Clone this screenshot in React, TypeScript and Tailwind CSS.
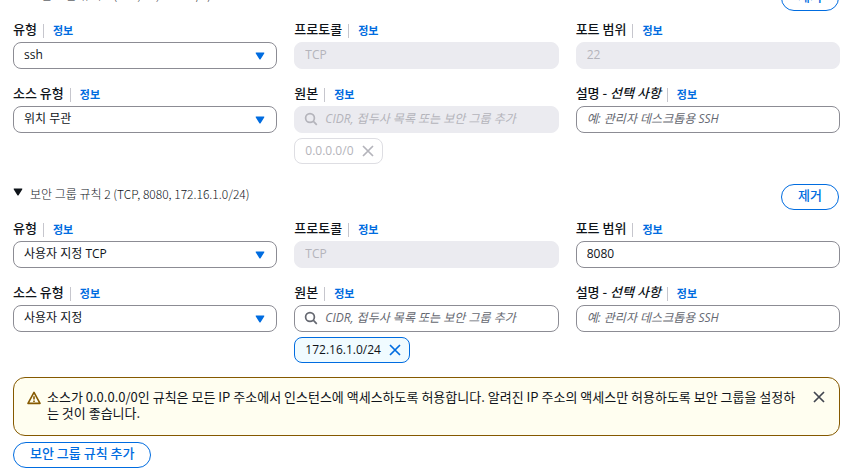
import { useState } from "react";
import type { ReactNode } from "react";

type Rule = {
  id: string;
  title: string;
  type: string;
  protocol: string;
  port: string;
  portLocked: boolean;
  sourceType: string;
  cidr: string;
  sourceLocked: boolean;
};

const rules: Rule[] = [
  {
    id: "rule-1",
    title: "보안 그룹 규칙 1 (TCP, 22, 0.0.0.0/0)",
    type: "ssh",
    protocol: "TCP",
    port: "22",
    portLocked: true,
    sourceType: "위치 무관",
    cidr: "0.0.0.0/0",
    sourceLocked: true,
  },
  {
    id: "rule-2",
    title: "보안 그룹 규칙 2 (TCP, 8080, 172.16.1.0/24)",
    type: "사용자 지정 TCP",
    protocol: "TCP",
    port: "8080",
    portLocked: false,
    sourceType: "사용자 지정",
    cidr: "172.16.1.0/24",
    sourceLocked: false,
  },
];

const control =
  "block h-[27px] w-full rounded-lg border border-[#8c8c94] bg-white px-2.5 pb-0.5 text-[#0f141a] placeholder:italic placeholder:text-[#656871] placeholder:opacity-100 disabled:border-[#ebebf0] disabled:bg-[#ebebf0] disabled:text-[#b4b4bb] disabled:placeholder:text-[#b4b4bb]";

const pill =
  "h-[26px] shrink-0 rounded-full border border-[#006ce0] bg-white px-4 pb-1 font-['Noto_Sans_CJK_KR',sans-serif] text-[13px] leading-4 font-medium text-[#006ce0]";

function CloseIcon({ className }: { className: string }) {
  return (
    <svg viewBox="0 0 12 12" className={className} fill="none" stroke="currentColor" strokeWidth="1.7">
      <path d="M1 1l10 10M11 1L1 11" />
    </svg>
  );
}

function Field({
  id,
  label,
  hint,
  children,
}: {
  id: string;
  label: string;
  hint?: string;
  children: ReactNode;
}) {
  return (
    <div className="min-w-0">
      <div className="mb-1 flex h-[18px] items-center font-['Noto_Sans_CJK_KR',sans-serif]">
        <label htmlFor={id} className="text-[13px] leading-4 font-medium">
          {label}
          {hint && <i> {hint}</i>}
        </label>
        <span className="mt-1 ml-1.5 h-3.5 w-px bg-[#c6c6cd]" />
        <a href="#info" className="mt-0.5 ml-[9px] text-[11px] leading-4 font-bold text-[#006ce0]">
          정보
        </a>
      </div>
      {children}
    </div>
  );
}

function Select({ id, value }: { id: string; value: string }) {
  return (
    <div className="relative">
      <select id={id} defaultValue={value} className={`${control} appearance-none`}>
        <option>{value}</option>
      </select>
      <svg viewBox="0 0 10 8" className="pointer-events-none absolute top-2.5 right-3 h-2 w-2.5 fill-[#006ce0]">
        <path d="M1.2 0.5h7.6q1 0 .4.9L5.6 7.2q-.6.8-1.2 0L.8 1.4Q.2.5 1.2.5z" />
      </svg>
    </div>
  );
}

function RuleHeader({ rule }: { rule: Rule }) {
  return (
    <div className="flex items-start justify-between pr-px">
      <button
        type="button"
        className="flex items-center font-['Noto_Sans_CJK_KR',sans-serif] text-xs leading-5 font-light text-[#0f141a]"
      >
        <svg viewBox="0 0 10 8" className="mr-[7px] mb-1 h-2 w-2.5 fill-[#0f141a]">
          <path d="M1.2 0.5h7.6q1 0 .4.9L5.6 7.2q-.6.8-1.2 0L.8 1.4Q.2.5 1.2.5z" />
        </svg>
        {rule.title}
      </button>
      <button type="button" className={pill}>
        제거
      </button>
    </div>
  );
}

function RuleForm({ rule }: { rule: Rule }) {
  const chip = rule.sourceLocked
    ? "border-[#dedee3] bg-white text-[#b4b4bb]"
    : "border-[#006ce0] bg-[#f0fbff] text-[#0f141a]";

  return (
    <section>
      <RuleHeader rule={rule} />
      <div className="mt-[9px] grid grid-cols-3 gap-x-[17px] gap-y-[15px]">
        <Field id={`${rule.id}-type`} label="유형">
          <Select id={`${rule.id}-type`} value={rule.type} />
        </Field>
        <Field id={`${rule.id}-protocol`} label="프로토콜">
          <input id={`${rule.id}-protocol`} className={control} defaultValue={rule.protocol} disabled />
        </Field>
        <Field id={`${rule.id}-port`} label="포트 범위">
          <input
            id={`${rule.id}-port`}
            className={control}
            defaultValue={rule.port}
            disabled={rule.portLocked}
          />
        </Field>
        <Field id={`${rule.id}-source-type`} label="소스 유형">
          <Select id={`${rule.id}-source-type`} value={rule.sourceType} />
        </Field>
        <Field id={`${rule.id}-source`} label="원본">
          <div className="relative">
            <input
              id={`${rule.id}-source`}
              className={`${control} pl-[30px]`}
              placeholder="CIDR, 접두사 목록 또는 보안 그룹 추가"
              disabled={rule.sourceLocked}
            />
            <svg
              viewBox="0 0 14 14"
              className={`pointer-events-none absolute top-1.5 left-2.5 size-3.5 ${rule.sourceLocked ? "text-[#b4b4bb]" : "text-[#656871]"}`}
              fill="none"
              stroke="currentColor"
              strokeWidth="1.7"
            >
              <circle cx="6" cy="6" r="4.4" />
              <path d="M9.2 9.2l3.6 3.6" />
            </svg>
          </div>
          <div className={`mt-[5px] inline-flex h-[26px] items-center rounded-lg border pr-2 pl-2.5 align-top ${chip}`}>
            <span>{rule.cidr}</span>
            <button
              type="button"
              aria-label={`${rule.cidr} 제거`}
              disabled={rule.sourceLocked}
              className={rule.sourceLocked ? "ml-2" : "ml-2 text-[#006ce0]"}
            >
              <CloseIcon className="size-3" />
            </button>
          </div>
        </Field>
        <Field id={`${rule.id}-description`} label="설명 -" hint="선택 사항">
          <input
            id={`${rule.id}-description`}
            className={control}
            placeholder="예: 관리자 데스크톱용 SSH"
          />
        </Field>
      </div>
    </section>
  );
}

export default function App() {
  const [showWarning, setShowWarning] = useState(true);

  return (
    <div className="overflow-hidden bg-white pr-[5px] pl-[13px] font-['Open_Sans','Noto_Sans_CJK_KR',sans-serif] text-xs text-[#0f141a]">
      <div className="-mt-[15px] flex flex-col gap-5">
        {rules.map((rule) => (
          <RuleForm key={rule.id} rule={rule} />
        ))}
      </div>

      {showWarning && (
        <div className="mt-3.5 flex h-[59px] items-start rounded-xl border border-[#855900] bg-[#fffef0] pt-[11px] pr-3.5 pl-[13px]">
          <svg
            viewBox="0 0 14 14"
            className="mt-0.5 size-3.5 shrink-0 text-[#855900]"
            fill="none"
            stroke="currentColor"
            strokeWidth="1.6"
            strokeLinejoin="round"
          >
            <path d="M7 1.4L13 12.4H1z" />
            <path d="M7 5.2v3.4M7 9.6v1.4" />
          </svg>
          <p className="ml-1.5 flex-1 font-['Noto_Sans_CJK_KR',sans-serif] text-[13px] leading-4">
            소스가 0.0.0.0/0인 규칙은 모든 IP 주소에서 인스턴스에 액세스하도록 허용합니다. 알려진 IP 주소의
            액세스만 허용하도록 보안 그룹을 설정하는 것이 좋습니다.
          </p>
          <button
            type="button"
            aria-label="닫기"
            className="mt-0.5 ml-4 text-[#424650]"
            onClick={() => setShowWarning(false)}
          >
            <CloseIcon className="size-3" />
          </button>
        </div>
      )}

      <button type="button" className={`${pill} mt-1.5 block`}>
        보안 그룹 규칙 추가
      </button>
    </div>
  );
}
